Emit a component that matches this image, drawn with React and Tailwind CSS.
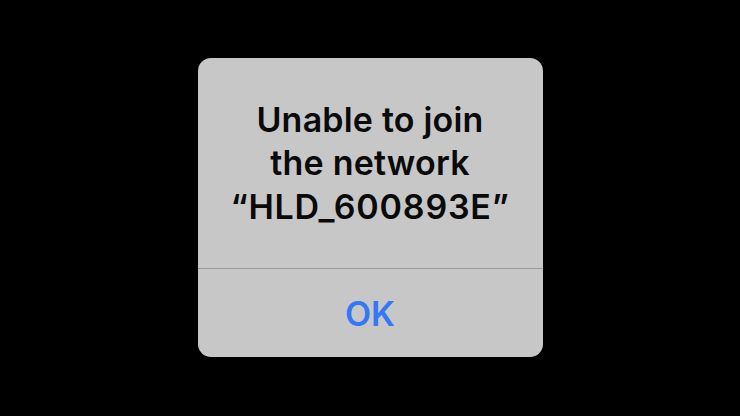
export default function App() {
  return (
    <div className="w-[740px] h-[416px] bg-black flex items-center justify-center" style={{ fontFamily: 'Inter, "Liberation Sans", sans-serif' }}>
      <div className="w-[345px] h-[299px] -mt-[1px] bg-[#c7c7c7] rounded-[13px] flex flex-col overflow-hidden">
        <div className="h-[210px] flex items-center justify-center text-center">
          <p className="text-[34px] leading-[43.5px] font-semibold text-[#0a0a0a] tracking-[0.2px]">
            Unable to join
            <br />
            the network
            <br />
            <span className="tracking-[0.8px]">“HLD_600893E”</span>
          </p>
        </div>
        <div className="h-px bg-[#999999]" />
        <button className="flex-1 flex items-center justify-center text-[34px] font-semibold text-[#3478f6]">
          OK
        </button>
      </div>
    </div>
  );
}
